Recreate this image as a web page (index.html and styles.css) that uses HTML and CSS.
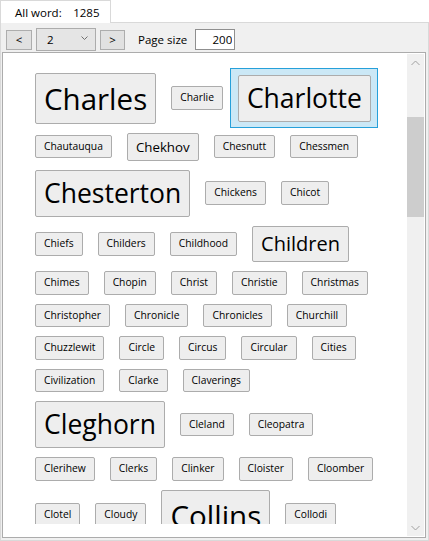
FILE: index.html
```html
<!DOCTYPE html>
<html lang="en">
<head>
  <meta charset="UTF-8" />
  <meta name="viewport" content="width=device-width, initial-scale=1.0"/>
  <title>Word Cloud</title>
  <link rel="stylesheet" href="styles.css">
</head>
<body>
  <div class="tabs">
    <div class="tab"><span>All word:</span><span class="count">1285</span></div>
  </div>

  <div class="tab-body">
    <div class="toolbar">
      <button class="nav">&lt;</button>
      <div class="combo">
        <span>2</span>
        <svg width="7" height="4" viewBox="0 0 7 4"><path d="M0.5 0.5 L3.5 3.5 L6.5 0.5" fill="none" stroke="#707070" stroke-width="1"/></svg>
      </div>
      <button class="nav next">&gt;</button>
      <span class="size-label">Page size</span>
      <input class="size-input" value="200" />
    </div>

    <div class="panel">
      <div class="viewport">
        <div class="words">
          <div class="row">
            <div class="item"><button class="word xxl">Charles</button></div>
            <div class="item"><button class="word">Charlie</button></div>
            <div class="item selected"><button class="word xl">Charlotte</button></div>
          </div>
          <div class="row">
            <div class="item"><button class="word">Chautauqua</button></div>
            <div class="item"><button class="word m">Chekhov</button></div>
            <div class="item"><button class="word">Chesnutt</button></div>
            <div class="item"><button class="word">Chessmen</button></div>
          </div>
          <div class="row">
            <div class="item"><button class="word xl">Chesterton</button></div>
            <div class="item"><button class="word">Chickens</button></div>
            <div class="item"><button class="word">Chicot</button></div>
          </div>
          <div class="row">
            <div class="item"><button class="word">Chiefs</button></div>
            <div class="item"><button class="word">Childers</button></div>
            <div class="item"><button class="word">Childhood</button></div>
            <div class="item"><button class="word l">Children</button></div>
          </div>
          <div class="row">
            <div class="item"><button class="word">Chimes</button></div>
            <div class="item"><button class="word">Chopin</button></div>
            <div class="item"><button class="word">Christ</button></div>
            <div class="item"><button class="word">Christie</button></div>
            <div class="item"><button class="word">Christmas</button></div>
          </div>
          <div class="row">
            <div class="item"><button class="word">Christopher</button></div>
            <div class="item"><button class="word">Chronicle</button></div>
            <div class="item"><button class="word">Chronicles</button></div>
            <div class="item"><button class="word">Churchill</button></div>
          </div>
          <div class="row">
            <div class="item"><button class="word">Chuzzlewit</button></div>
            <div class="item"><button class="word">Circle</button></div>
            <div class="item"><button class="word">Circus</button></div>
            <div class="item"><button class="word">Circular</button></div>
            <div class="item"><button class="word">Cities</button></div>
          </div>
          <div class="row">
            <div class="item"><button class="word">Civilization</button></div>
            <div class="item"><button class="word">Clarke</button></div>
            <div class="item"><button class="word">Claverings</button></div>
          </div>
          <div class="row">
            <div class="item"><button class="word xl">Cleghorn</button></div>
            <div class="item"><button class="word">Cleland</button></div>
            <div class="item"><button class="word">Cleopatra</button></div>
          </div>
          <div class="row">
            <div class="item"><button class="word">Clerihew</button></div>
            <div class="item"><button class="word">Clerks</button></div>
            <div class="item"><button class="word">Clinker</button></div>
            <div class="item"><button class="word">Cloister</button></div>
            <div class="item"><button class="word">Cloomber</button></div>
          </div>
          <div class="row">
            <div class="item"><button class="word">Clotel</button></div>
            <div class="item"><button class="word">Cloudy</button></div>
            <div class="item"><button class="word xxl">Collins</button></div>
            <div class="item"><button class="word">Collodi</button></div>
          </div>
        </div>
      </div>

      <div class="scrollbar">
        <div class="sb-arrow">
          <svg width="9" height="6" viewBox="0 0 9 6"><path d="M0.5 5 L4.5 1 L8.5 5" fill="none" stroke="#a0a0a0" stroke-width="1"/></svg>
        </div>
        <div class="track"><div class="thumb"></div></div>
        <div class="sb-arrow">
          <svg width="9" height="6" viewBox="0 0 9 6"><path d="M0.5 1 L4.5 5 L8.5 1" fill="none" stroke="#a0a0a0" stroke-width="1"/></svg>
        </div>
      </div>
    </div>
  </div>
</body>
</html>
```

FILE: styles.css
```css
body {
  margin: 0;
  height: 541px;
  overflow: hidden;
  background: #fff;
  font-family: 'Open Sans', 'Noto Sans', sans-serif;
  color: #000;
}
.tabs {
  display: flex;
  height: 22px;
}
.tab {
  position: relative;
  z-index: 1;
  box-sizing: border-box;
  width: 111px;
  height: 23px;
  padding: 1px 0 0 14px;
  background: #fff;
  border: 1px solid #d9d9d9;
  border-bottom: none;
  font-size: 11.5px;
  line-height: 21px;
  display: flex;
}
.tab .count {
  margin-left: 11.5px;
}
.tab-body {
  box-sizing: border-box;
  height: 519px;
  border: 1px solid #d9d9d9;
  background: #f0f0f0;
  display: flex;
  flex-direction: column;
}
.toolbar {
  display: flex;
  align-items: center;
  height: 23px;
  padding: 5px 0 0 5px;
  font-size: 11.5px;
}
.nav {
  box-sizing: border-box;
  width: 26px;
  height: 20px;
  padding: 0;
  background: #e1e1e1;
  border: 1px solid #adadad;
  font-family: inherit;
  font-size: 11.5px;
  color: #000;
}
.nav.next {
  width: 25px;
  margin-left: 4px;
}
.combo {
  box-sizing: border-box;
  width: 60px;
  height: 23px;
  margin-left: 4px;
  padding: 0 7px 0 10px;
  background: #e5e5e5;
  border: 1px solid #acacac;
  display: flex;
  align-items: center;
  justify-content: space-between;
}
.combo svg {
  margin-top: -3px;
}
.size-label {
  margin-left: 13px;
}
.size-input {
  box-sizing: border-box;
  width: 40px;
  height: 21px;
  margin-left: 8px;
  padding: 0 2px;
  border: 1px solid #8f8f8f;
  background: #fff;
  font-family: inherit;
  font-size: 11.5px;
  text-align: right;
  color: #000;
}
.panel {
  flex: 1;
  display: flex;
  margin: 1px 2px 2px 1px;
  padding: 1px;
  background: #fff;
  border: 1px solid #acacac;
  min-height: 0;
}
.viewport {
  flex: 1;
  overflow: hidden;
  margin: 13px 13px 12px 13px;
}
.words {
  padding: 1.2px 0 0 10.5px;
}
.row {
  display: flex;
  align-items: stretch;
}
.item {
  display: flex;
  align-items: center;
  padding: 3.5px 6.5px;
  border: 1px solid transparent;
}
.item.selected {
  background: #cbe8f6;
  border-color: #26a0da;
}
.word {
  padding: 3px 8px;
  background: #eeeeee;
  border: 1px solid #acacac;
  border-radius: 2px;
  font-family: inherit;
  font-size: 10.3px;
  line-height: 15.5px;
  color: #000;
  white-space: nowrap;
}
.word.m {
  font-size: 13.3px;
  line-height: 20px;
}
.word.l {
  font-size: 20px;
  line-height: 28.5px;
}
.word.xl {
  font-size: 26.5px;
  line-height: 39px;
}
.word.xxl {
  font-size: 29.5px;
  line-height: 43px;
}
.scrollbar {
  width: 17px;
  display: flex;
  flex-direction: column;
  background: #f0f0f0;
}
.sb-arrow {
  height: 17px;
  display: flex;
  align-items: center;
  justify-content: center;
}
.track {
  flex: 1;
}
.thumb {
  margin-top: 46px;
  height: 100px;
  background: #cdcdcd;
}
```
